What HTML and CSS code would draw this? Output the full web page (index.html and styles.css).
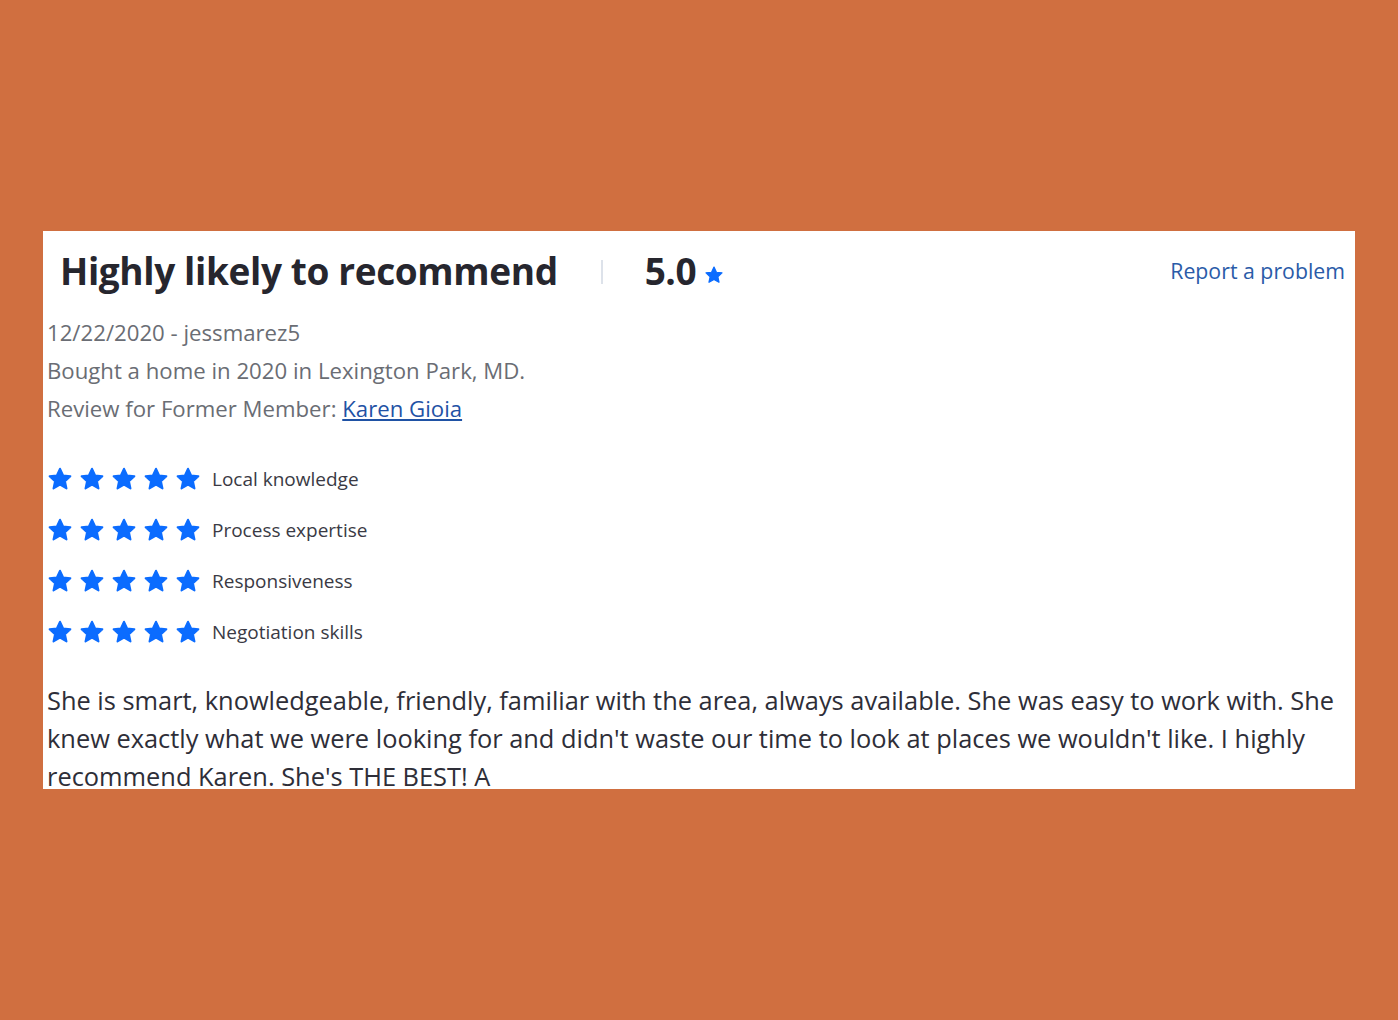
FILE: index.html
```html
<!DOCTYPE html>
<html>
<head>
<meta charset="utf-8">
<link rel="stylesheet" href="styles.css">
</head>
<body>
<div class="card">
  <div class="head">
    <h2 class="title">Highly likely to recommend</h2>
    <span class="divider"></span>
    <span class="score">5.0</span>
    <svg class="score-star" viewBox="0 0 24 24"><path d="M12 2.5l2.9 6.2 6.7.7-5 4.6 1.4 6.7L12 17.3l-6 3.4 1.4-6.7-5-4.6 6.7-.7z"/></svg>
    <a class="report" href="#">Report a problem</a>
  </div>
  <div class="meta">
    <div>12/22/2020 - jessmarez5</div>
    <div>Bought a home in 2020 in Lexington Park, MD.</div>
    <div>Review for Former Member: <a class="member" href="#">Karen Gioia</a></div>
  </div>
  <div class="ratings">
    <div class="rating"><span class="stars"><svg viewBox="0 0 24 24"><path d="M12 2.5l2.9 6.2 6.7.7-5 4.6 1.4 6.7L12 17.3l-6 3.4 1.4-6.7-5-4.6 6.7-.7z"/></svg><svg viewBox="0 0 24 24"><path d="M12 2.5l2.9 6.2 6.7.7-5 4.6 1.4 6.7L12 17.3l-6 3.4 1.4-6.7-5-4.6 6.7-.7z"/></svg><svg viewBox="0 0 24 24"><path d="M12 2.5l2.9 6.2 6.7.7-5 4.6 1.4 6.7L12 17.3l-6 3.4 1.4-6.7-5-4.6 6.7-.7z"/></svg><svg viewBox="0 0 24 24"><path d="M12 2.5l2.9 6.2 6.7.7-5 4.6 1.4 6.7L12 17.3l-6 3.4 1.4-6.7-5-4.6 6.7-.7z"/></svg><svg viewBox="0 0 24 24"><path d="M12 2.5l2.9 6.2 6.7.7-5 4.6 1.4 6.7L12 17.3l-6 3.4 1.4-6.7-5-4.6 6.7-.7z"/></svg></span><span class="label">Local knowledge</span></div>
    <div class="rating"><span class="stars"><svg viewBox="0 0 24 24"><path d="M12 2.5l2.9 6.2 6.7.7-5 4.6 1.4 6.7L12 17.3l-6 3.4 1.4-6.7-5-4.6 6.7-.7z"/></svg><svg viewBox="0 0 24 24"><path d="M12 2.5l2.9 6.2 6.7.7-5 4.6 1.4 6.7L12 17.3l-6 3.4 1.4-6.7-5-4.6 6.7-.7z"/></svg><svg viewBox="0 0 24 24"><path d="M12 2.5l2.9 6.2 6.7.7-5 4.6 1.4 6.7L12 17.3l-6 3.4 1.4-6.7-5-4.6 6.7-.7z"/></svg><svg viewBox="0 0 24 24"><path d="M12 2.5l2.9 6.2 6.7.7-5 4.6 1.4 6.7L12 17.3l-6 3.4 1.4-6.7-5-4.6 6.7-.7z"/></svg><svg viewBox="0 0 24 24"><path d="M12 2.5l2.9 6.2 6.7.7-5 4.6 1.4 6.7L12 17.3l-6 3.4 1.4-6.7-5-4.6 6.7-.7z"/></svg></span><span class="label">Process expertise</span></div>
    <div class="rating"><span class="stars"><svg viewBox="0 0 24 24"><path d="M12 2.5l2.9 6.2 6.7.7-5 4.6 1.4 6.7L12 17.3l-6 3.4 1.4-6.7-5-4.6 6.7-.7z"/></svg><svg viewBox="0 0 24 24"><path d="M12 2.5l2.9 6.2 6.7.7-5 4.6 1.4 6.7L12 17.3l-6 3.4 1.4-6.7-5-4.6 6.7-.7z"/></svg><svg viewBox="0 0 24 24"><path d="M12 2.5l2.9 6.2 6.7.7-5 4.6 1.4 6.7L12 17.3l-6 3.4 1.4-6.7-5-4.6 6.7-.7z"/></svg><svg viewBox="0 0 24 24"><path d="M12 2.5l2.9 6.2 6.7.7-5 4.6 1.4 6.7L12 17.3l-6 3.4 1.4-6.7-5-4.6 6.7-.7z"/></svg><svg viewBox="0 0 24 24"><path d="M12 2.5l2.9 6.2 6.7.7-5 4.6 1.4 6.7L12 17.3l-6 3.4 1.4-6.7-5-4.6 6.7-.7z"/></svg></span><span class="label">Responsiveness</span></div>
    <div class="rating"><span class="stars"><svg viewBox="0 0 24 24"><path d="M12 2.5l2.9 6.2 6.7.7-5 4.6 1.4 6.7L12 17.3l-6 3.4 1.4-6.7-5-4.6 6.7-.7z"/></svg><svg viewBox="0 0 24 24"><path d="M12 2.5l2.9 6.2 6.7.7-5 4.6 1.4 6.7L12 17.3l-6 3.4 1.4-6.7-5-4.6 6.7-.7z"/></svg><svg viewBox="0 0 24 24"><path d="M12 2.5l2.9 6.2 6.7.7-5 4.6 1.4 6.7L12 17.3l-6 3.4 1.4-6.7-5-4.6 6.7-.7z"/></svg><svg viewBox="0 0 24 24"><path d="M12 2.5l2.9 6.2 6.7.7-5 4.6 1.4 6.7L12 17.3l-6 3.4 1.4-6.7-5-4.6 6.7-.7z"/></svg><svg viewBox="0 0 24 24"><path d="M12 2.5l2.9 6.2 6.7.7-5 4.6 1.4 6.7L12 17.3l-6 3.4 1.4-6.7-5-4.6 6.7-.7z"/></svg></span><span class="label">Negotiation skills</span></div>
  </div>
  <p class="review">She is smart, knowledgeable, friendly, familiar with the area, always available. She was easy to work with. She knew exactly what we were looking for and didn't waste our time to look at places we wouldn't like. I highly recommend Karen. She's THE BEST! A</p>
</div>
</body>
</html>
```

FILE: styles.css
```css
html, body {
  margin: 0;
  background: #d06f40;
}
body {
  padding: 231px 43px 0;
  height: 1020px;
  box-sizing: border-box;
  font-family: "Open Sans", "Liberation Sans", sans-serif;
}
.card {
  background: #fff;
  height: 558px;
  overflow: hidden;
  box-sizing: border-box;
}
.head {
  display: flex;
  align-items: center;
  height: 78px;
  padding: 0 10px 0 17px;
}
.title {
  margin: 0;
  font-size: 37px;
  font-weight: 700;
  color: #26262e;
  letter-spacing: -0.38px;
}
.divider {
  width: 2px;
  height: 24px;
  background: #dde2ea;
  margin: 4px 0 0 43px;
}
.score {
  margin-left: 42px;
  font-size: 37px;
  font-weight: 700;
  color: #26262e;
  letter-spacing: -0.5px;
}
.score-star {
  width: 20px;
  height: 20px;
  fill: #0b6cff;
  stroke: #0b6cff;
  stroke-width: 1.5;
  stroke-linejoin: round;
  margin: 10px 0 0 8px;
}
.report {
  margin-left: auto;
  color: #2a5ba8;
  text-decoration: none;
  font-size: 21.3px;
}
.meta {
  padding: 5px 4px 0;
  font-size: 22.2px;
  line-height: 38px;
  color: #6a6d74;
}
.member {
  color: #1f52a5;
  text-decoration: underline;
}
.ratings {
  padding: 25px 4px 0;
  display: flex;
  flex-direction: column;
}
.rating {
  display: flex;
  align-items: center;
  height: 51px;
}
.stars {
  display: flex;
  gap: 6px;
}
.stars svg {
  width: 26px;
  height: 26px;
  fill: #0b6cff;
  stroke: #0b6cff;
  stroke-width: 1.8;
  stroke-linejoin: round;
}
.label {
  margin-left: 11px;
  font-size: 19px;
  color: #3a3a44;
}
.review {
  margin: 24px 0 0;
  padding: 0 4px;
  font-size: 25.4px;
  line-height: 38px;
  color: #2e2e38;
}
```
